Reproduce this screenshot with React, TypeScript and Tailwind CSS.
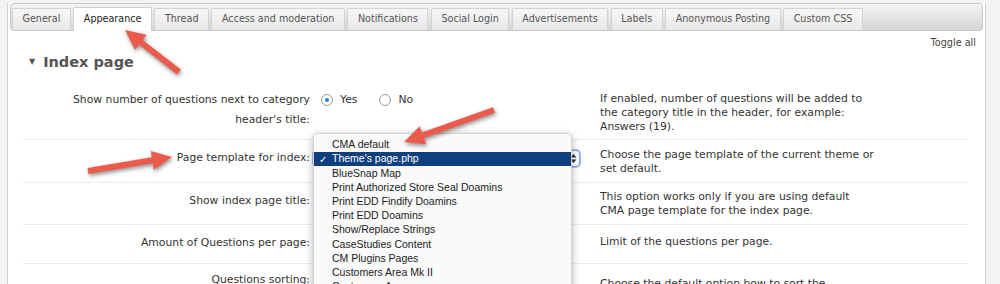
import React from "react";

type Pt = [number, number];

function arrowPoints(t: Pt, p: Pt, w = 6, hw = 19, hl = 20): string {
  const dx = p[0] - t[0];
  const dy = p[1] - t[1];
  const len = Math.hypot(dx, dy);
  const ux = dx / len;
  const uy = dy / len;
  const nx = -uy;
  const ny = ux;
  const bx = p[0] - ux * hl;
  const by = p[1] - uy * hl;
  const pts: Pt[] = [
    [t[0] + (nx * w) / 2, t[1] + (ny * w) / 2],
    [bx + (nx * w) / 2, by + (ny * w) / 2],
    [bx + (nx * hw) / 2, by + (ny * hw) / 2],
    p,
    [bx - (nx * hw) / 2, by - (ny * hw) / 2],
    [bx - (nx * w) / 2, by - (ny * w) / 2],
    [t[0] - (nx * w) / 2, t[1] - (ny * w) / 2],
  ];
  return pts.map((q) => `${q[0].toFixed(1)},${q[1].toFixed(1)}`).join(" ");
}

const tabs = [
  "General",
  "Appearance",
  "Thread",
  "Access and moderation",
  "Notifications",
  "Social Login",
  "Advertisements",
  "Labels",
  "Anonymous Posting",
  "Custom CSS",
];

const menuItems = [
  "CMA default",
  "Theme's page.php",
  "BlueSnap Map",
  "Print Authorized Store Seal Doamins",
  "Print EDD Findify Doamins",
  "Print EDD Doamins",
  "Show/Replace Strings",
  "CaseStudies Content",
  "CM Plugins Pages",
  "Customers Area Mk II",
  "Customers Area",
];

function Radio({ checked }: { checked?: boolean }) {
  return (
    <span className="inline-flex h-[12px] w-[12px] items-center justify-center rounded-full border border-[#9a9a9a] bg-white">
      {checked && <span className="h-[4px] w-[4px] rounded-full bg-[#1e88e5]" />}
    </span>
  );
}

export default function App() {
  return (
    <div className="relative h-[284px] w-[1000px] overflow-hidden bg-[#f3f3f3] font-['DejaVu_Sans',sans-serif] text-[#333]">
      <div className="ml-[7px] h-full w-[979px] border-x border-[#cfcfcf] bg-white">
        {/* tab bar */}
        <div className="mx-[2px] mt-[3px] flex h-[28px] items-end gap-[2.5px] rounded-[4px] border border-[#c9c9c9] bg-gradient-to-b from-[#f4f4f4] to-[#d6d6d6] pl-[1px]">
          {tabs.map((t) =>
            t === "Appearance" ? (
              <div
                key={t}
                className="mb-[-1px] flex h-[24px] items-center rounded-t-[2px] border border-b-0 border-[#d0d0d0] bg-white px-[9.5px] text-[9.6px] text-[#222]"
              >
                {t}
              </div>
            ) : (
              <div
                key={t}
                className="flex h-[22px] items-center rounded-t-[2px] border border-b-0 border-[#d3d3d3] bg-gradient-to-b from-[#f7f7f7] to-[#e8e8e8] px-[9.5px] text-[9.6px] text-[#555]"
              >
                {t}
              </div>
            )
          )}
        </div>

        {/* toggle all */}
        <div className="mt-[6px] pr-[9px] text-right text-[9.7px] leading-[12px] text-[#444]">
          Toggle all
        </div>

        {/* heading */}
        <div className="mt-[4px] flex items-center pl-[21px] leading-[18px]">
          <span className="text-[8px] text-[#555]">▼</span>
          <span className="ml-[8px] text-[14.5px] font-bold text-[#555]">Index page</span>
        </div>

        {/* rows */}
        <div className="ml-[15px] mt-[12px] w-[945px] text-[10.8px]">
          <div className="grid h-[57px] grid-cols-[290px_287px_1fr] border-b border-[#ececec]">
            <div className="pr-[3px] pt-[7px] text-right leading-[20px]">
              Show number of questions next to category
              <br />
              header's title:
            </div>
            <div className="flex items-center gap-[7px] self-start pl-[8px] pt-[11px] leading-[12px]">
              <Radio checked />
              <span>Yes</span>
              <span className="ml-[15px] flex items-center gap-[7px]">
                <Radio />
                <span>No</span>
              </span>
            </div>
            <div className="pt-[9px] leading-[14px]">
              If enabled, number of questions will be added to
              <br />
              the category title in the header, for example:
              <br />
              Answers (19).
            </div>
          </div>

          <div className="grid h-[43px] grid-cols-[290px_287px_1fr] border-b border-[#ececec]">
            <div className="pr-[3px] pt-[8px] text-right leading-[20px]">Page template for index:</div>
            <div className="pt-[10px]">
              <div className="flex h-[17px] w-[267px] items-center justify-end rounded-[4px] border border-[#7aa7e6] bg-white pr-[2px] shadow-[0_0_0_1px_#a9c8f2]">
                <svg width="7" height="11" viewBox="0 0 7 11">
                  <path d="M0.5 4.5 L3.5 1 L6.5 4.5 Z" fill="#333" />
                  <path d="M0.5 6.5 L3.5 10 L6.5 6.5 Z" fill="#333" />
                </svg>
              </div>
            </div>
            <div className="pt-[8px] leading-[14px]">
              Choose the page template of the current theme or
              <br />
              set default.
            </div>
          </div>

          <div className="grid h-[42px] grid-cols-[290px_287px_1fr] border-b border-[#ececec]">
            <div className="pr-[3px] pt-[8px] text-right leading-[20px]">Show index page title:</div>
            <div />
            <div className="pt-[7px] leading-[14px]">
              This option works only if you are using default
              <br />
              CMA page template for the index page.
            </div>
          </div>

          <div className="grid h-[39px] grid-cols-[290px_287px_1fr] border-b border-[#ececec]">
            <div className="pr-[3px] pt-[8px] text-right leading-[20px]">Amount of Questions per page:</div>
            <div />
            <div className="pt-[10px] leading-[14px]">Limit of the questions per page.</div>
          </div>

          <div className="grid h-[40px] grid-cols-[290px_287px_1fr]">
            <div className="pr-[3px] pt-[6px] text-right leading-[20px]">Questions sorting:</div>
            <div />
            <div className="pt-[13px] leading-[14px]">Choose the default option how to sort the</div>
          </div>
        </div>
      </div>

      {/* dropdown popup menu */}
      <div className="absolute left-[313px] top-[133px] h-[170px] w-[259px] rounded-t-[5px] border border-[#d4d4d4] bg-[#fafafa] pt-[4px] font-['Liberation_Sans',sans-serif] text-[10.5px] text-[#1a1a1a] shadow-[0_2px_8px_rgba(0,0,0,0.3)]">
        {menuItems.map((m, i) =>
          i === 1 ? (
            <div key={m} className="relative flex h-[14.2px] items-center bg-[#0f3f7f] pl-[18px] text-white">
              <span className="absolute left-[5px] text-[10px]">✓</span>
              {m}
            </div>
          ) : (
            <div key={m} className="flex h-[14.2px] items-center pl-[18px]">
              {m}
            </div>
          )
        )}
      </div>

      {/* annotation arrows */}
      <svg
        className="pointer-events-none absolute left-0 top-0"
        width="1000"
        height="284"
        viewBox="0 0 1000 284"
        style={{ filter: "drop-shadow(1px 2px 2px rgba(0,0,0,0.45))" }}
      >
        <polygon points={arrowPoints([179, 72], [125, 30])} fill="#ec5a4b" />
        <polygon points={arrowPoints([494, 110], [404, 142])} fill="#ec5a4b" />
        <polygon points={arrowPoints([88, 171], [172, 157])} fill="#ec5a4b" />
      </svg>
    </div>
  );
}
